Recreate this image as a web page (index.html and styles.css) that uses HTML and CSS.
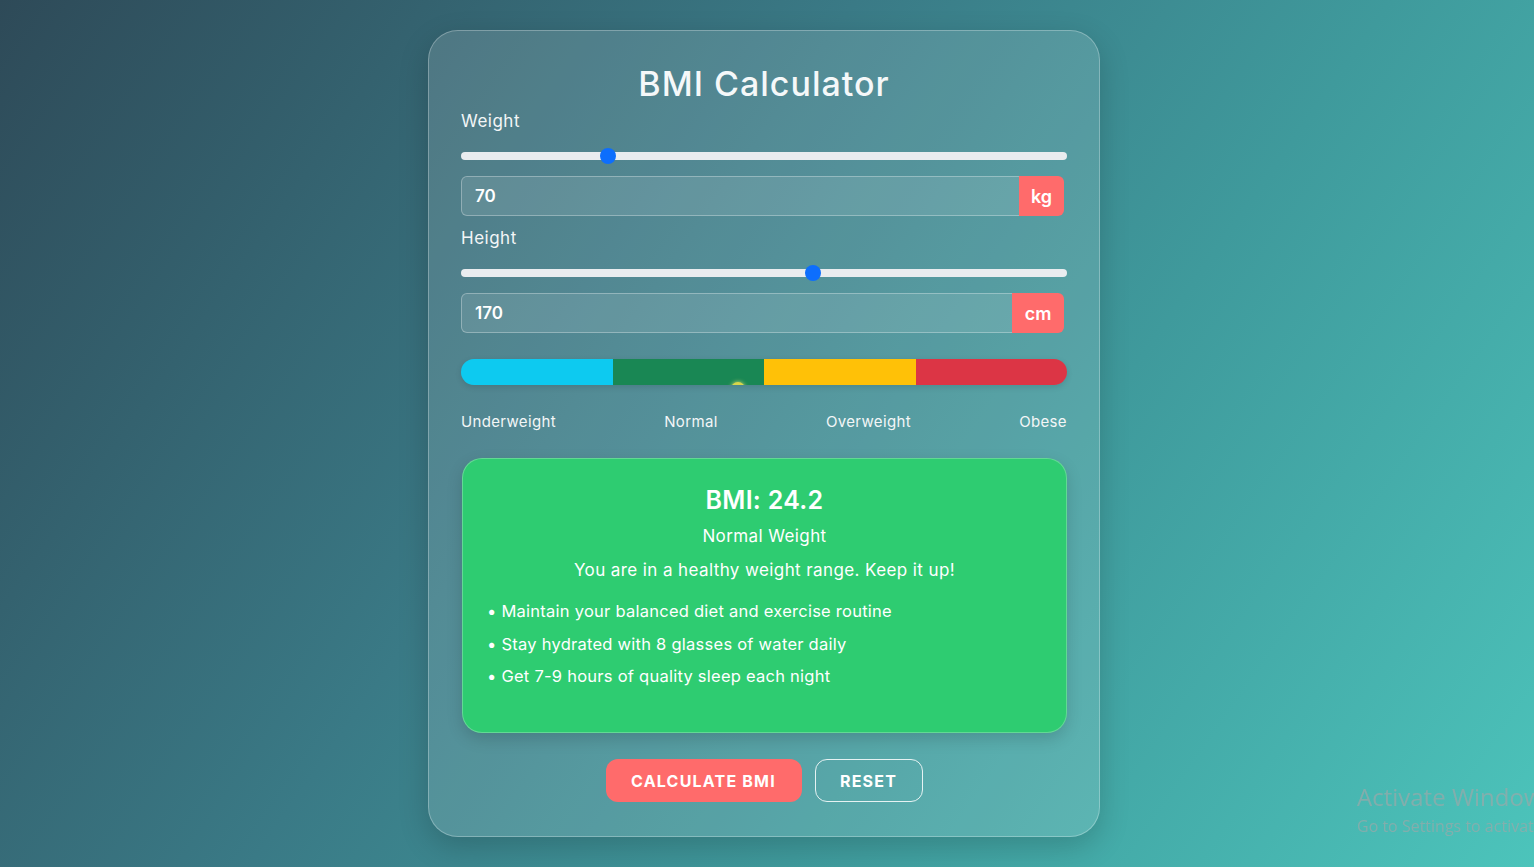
FILE: index.html
```html
<!DOCTYPE html>
<html lang="en">
<head>
<meta charset="utf-8">
<title>BMI Calculator</title>
<link rel="stylesheet" href="styles.css">
</head>
<body>
<main class="card">
  <h1 class="title">BMI Calculator</h1>

  <div class="field">
    <label class="label" for="w-range">Weight</label>
    <input id="w-range" class="range" type="range" min="30" max="200" value="70">
    <div class="input-group">
      <input class="num" type="text" value="70">
      <span class="unit">kg</span>
    </div>
  </div>

  <div class="field">
    <label class="label" for="h-range">Height</label>
    <input id="h-range" class="range" type="range" min="100" max="220" value="170">
    <div class="input-group">
      <input class="num" type="text" value="170">
      <span class="unit unit-cm">cm</span>
    </div>
  </div>

  <div class="scale">
    <div class="scale-bar">
      <span class="seg seg-under"></span>
      <span class="seg seg-normal"></span>
      <span class="seg seg-over"></span>
      <span class="seg seg-obese"></span>
      <span class="marker" style="left: 270px"></span>
    </div>
    <div class="scale-labels">
      <span>Underweight</span>
      <span>Normal</span>
      <span>Overweight</span>
      <span>Obese</span>
    </div>
  </div>

  <section class="result">
    <h2 class="bmi">BMI: 24.2</h2>
    <p class="category">Normal Weight</p>
    <p class="message">You are in a healthy weight range. Keep it up!</p>
    <ul class="tips">
      <li>• Maintain your balanced diet and exercise routine</li>
      <li>• Stay hydrated with 8 glasses of water daily</li>
      <li>• Get 7-9 hours of quality sleep each night</li>
    </ul>
  </section>

  <div class="actions">
    <button class="btn btn-primary" type="button">Calculate BMI</button>
    <button class="btn btn-outline" type="button">Reset</button>
  </div>
</main>

<div class="activate">
  <div class="activate-title">Activate Windows</div>
  <div class="activate-sub">Go to Settings to activate Windows.</div>
</div>
</body>
</html>
```

FILE: styles.css
```css
* { box-sizing: border-box; }

html, body { height: 100%; }

body {
  margin: 0;
  padding-right: 6px;
  min-height: 100vh;
  display: flex;
  align-items: center;
  justify-content: center;
  font-family: Inter, "Open Sans", sans-serif;
  color: #fff;
  background: linear-gradient(125deg, #2e4a58 0%, #3a7a86 40%, #3f9a9c 65%, #4cc4bb 100%);
  overflow: hidden;
}

.card {
  width: 672px;
  padding: 32px 32px 34px;
  border-radius: 30px;
  border: 1px solid rgba(255, 255, 255, 0.28);
  background: rgba(255, 255, 255, 0.13);
  box-shadow: 0 10px 30px rgba(0, 0, 0, 0.18);
}

.title {
  margin: 0 0 3px;
  text-align: center;
  font-size: 34px;
  font-weight: 500;
  line-height: 42px;
  letter-spacing: 1px;
  color: #f5f8f9;
}

.field { display: flex; flex-direction: column; }

.label {
  font-size: 17px;
  line-height: 26px;
  letter-spacing: 0.5px;
  color: #f3f6f7;
}

.range {
  -webkit-appearance: none;
  appearance: none;
  width: 100%;
  height: 16px;
  margin: 14px 0 12px;
  background: transparent;
}
.range::-webkit-slider-runnable-track {
  height: 8px;
  border-radius: 4px;
  background: #e9ecef;
}
.range::-webkit-slider-thumb {
  -webkit-appearance: none;
  width: 16px;
  height: 16px;
  margin-top: -4px;
  border-radius: 50%;
  background: #0d6efd;
  border: none;
}

.input-group {
  display: flex;
  height: 40px;
  margin-bottom: 9px;
}
.num {
  flex: 1;
  min-width: 0;
  height: 40px;
  padding: 0 13px;
  border: 1px solid rgba(255, 255, 255, 0.3);
  border-right: none;
  border-radius: 6px 0 0 6px;
  background: rgba(255, 255, 255, 0.1);
  color: #fff;
  font-family: inherit;
  font-size: 17px;
  font-weight: 600;
  outline: none;
}
.unit {
  width: 45px;
  display: flex;
  align-items: center;
  justify-content: center;
  margin-right: 3px;
  border-radius: 0 6px 6px 0;
  background: #ff6b6b;
  font-size: 18px;
  font-weight: 600;
}
.unit-cm { width: 52px; }

.scale { margin-top: 17px; }
.scale-bar {
  position: relative;
  display: flex;
  height: 26px;
  border-radius: 13px;
  overflow: hidden;
  box-shadow: 0 2px 6px rgba(0, 0, 0, 0.12);
}
.seg { flex: 1; }
.seg-under { background: #0dcaf0; }
.seg-normal { background: #198754; }
.seg-over { background: #ffc107; }
.seg-obese { background: #dc3545; }
.marker {
  position: absolute;
  top: 23px;
  width: 14px;
  height: 14px;
  border-radius: 50%;
  background: #d8d64a;
  box-shadow: 0 0 4px rgba(255, 240, 120, 0.8);
}

.scale-labels {
  display: flex;
  justify-content: space-between;
  margin-top: 27px;
  font-size: 15px;
  line-height: 20px;
  letter-spacing: 0.35px;
  color: #f3f6f7;
}

.result {
  margin: 26px 0 0 1px;
  height: 275px;
  padding: 24px 24px;
  border-radius: 20px;
  border: 1px solid rgba(255, 255, 255, 0.25);
  background: #2ecc71;
  box-shadow: 0 6px 16px rgba(0, 0, 0, 0.15);
  text-align: center;
}
.bmi {
  margin: 0;
  font-size: 25px;
  font-weight: 600;
  line-height: 34px;
  letter-spacing: 0.3px;
}
.category {
  margin: 6px 0 0;
  font-size: 17px;
  line-height: 26px;
  letter-spacing: 0.4px;
}
.message {
  margin: 8px 0 0;
  font-size: 17px;
  line-height: 26px;
  letter-spacing: 0.4px;
}
.tips {
  list-style: none;
  margin: 12px 0 0;
  padding: 0;
  text-align: left;
}
.tips li {
  font-size: 16.5px;
  line-height: 32.5px;
  letter-spacing: 0.25px;
}

.actions {
  display: flex;
  justify-content: center;
  gap: 13px;
  margin-top: 26px;
}
.btn {
  height: 43px;
  padding: 0;
  border-radius: 12px;
  font-family: inherit;
  font-size: 16px;
  font-weight: 700;
  letter-spacing: 1.2px;
  text-transform: uppercase;
  white-space: nowrap;
  color: #fff;
  cursor: pointer;
}
.btn-primary {
  width: 196px;
  border: none;
  background: #ff6b6b;
}
.btn-outline {
  width: 108px;
  border: 1.5px solid rgba(255, 255, 255, 0.85);
  background: transparent;
}

.activate {
  position: fixed;
  left: 1357px;
  top: 782px;
  white-space: nowrap;
  font-family: "Open Sans", sans-serif;
  color: rgba(150, 170, 170, 0.75);
}
.activate-title { font-size: 24px; line-height: 30px; }
.activate-sub { font-size: 16px; line-height: 28px; }
```
